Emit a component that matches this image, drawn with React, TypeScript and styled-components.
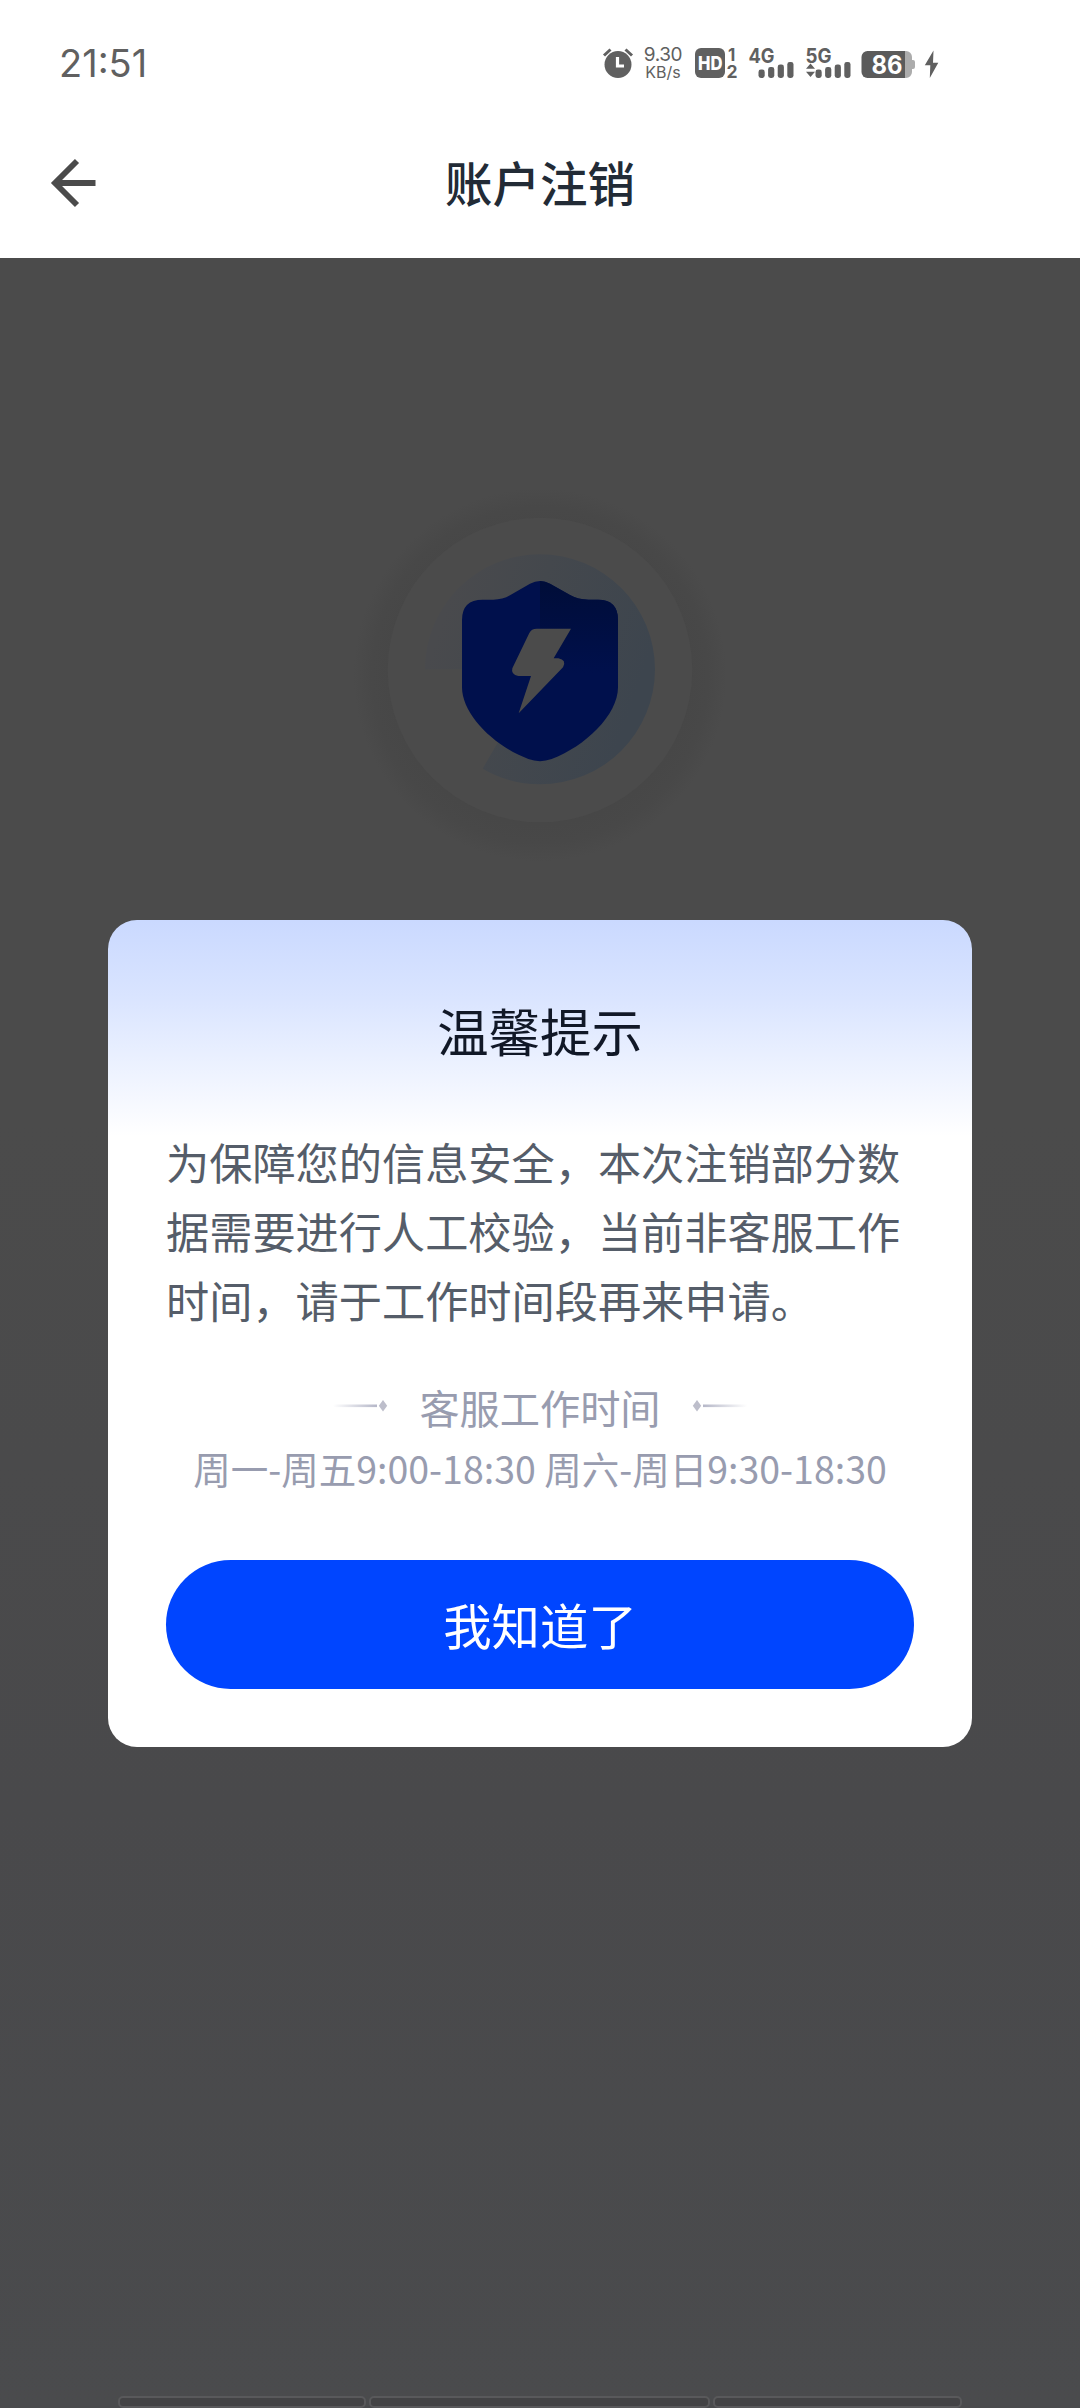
import React from "react";
import styled, { createGlobalStyle } from "styled-components";

const CJK = `"Noto Sans CJK SC", "Noto Sans", sans-serif`;
const INK = "#606060";

const GlobalStyle = createGlobalStyle`
  * { box-sizing: border-box; }
  body { margin: 0; background: #ffffff; font-family: ${CJK}; }
`;

const Page = styled.div`
  position: relative;
  width: 1080px;
  height: 2408px;
  display: flex;
  flex-direction: column;
  overflow: hidden;
`;

const StatusBar = styled.div`
  height: 112px;
  padding: 14px 140px 0 59px;
  display: flex;
  align-items: center;
  justify-content: space-between;
  color: ${INK};
`;

const Clock = styled.span`
  font-family: Inter, sans-serif;
  font-size: 38px;
  line-height: 44px;
  letter-spacing: 0;
`;

const StatusIcons = styled.div`
  display: flex;
  align-items: center;
  height: 40px;
`;

const Speed = styled.div`
  width: 44px;
  margin: 0 9px 0 7px;
  display: flex;
  flex-direction: column;
  align-items: center;
  font-family: Inter, sans-serif;
  font-size: 19px;
  letter-spacing: -0.4px;
  line-height: 18px;
`;

const SpeedUnit = styled.span`
  font-size: 16px;
  line-height: 16px;
  letter-spacing: 0;
`;

const Glyph = styled.svg<{ $gap?: number }>`
  display: block;
  flex: none;
  overflow: visible;
  margin-left: ${(p) => p.$gap ?? 0}px;
`;

const NavBar = styled.header`
  height: 146px;
  padding: 0 50px;
  display: grid;
  grid-template-columns: 60px 1fr 60px;
  align-items: center;
`;

const NavTitle = styled.h1`
  margin: 0;
  padding-bottom: 6px;
  text-align: center;
  font-size: 47.5px;
  line-height: 70px;
  font-weight: 500;
  color: #222b36;
`;

const BackButton = styled.button`
  border: 0;
  padding: 0;
  margin-top: -5px;
  background: none;
  height: 50px;
`;

const Dimmed = styled.main`
  flex: 1;
  display: flex;
  flex-direction: column;
  align-items: center;
  padding-top: 222px;
  background: linear-gradient(#4b4b4b 0%, #4b4b4b 40%, #49494b 72%, #4a4b4d 100%);
`;

const Segments = styled.div`
  margin-top: auto;
  width: 844px;
  display: flex;
  gap: 3px;
`;

const Segment = styled.div<{ $width: number }>`
  width: ${(p) => p.$width}px;
  height: 12px;
  border: 2px solid #59595b;
  border-radius: 5px;
  background: #434345;
`;

const Overlay = styled.div`
  position: absolute;
  inset: 258px 0 0;
  display: flex;
  flex-direction: column;
  align-items: center;
  padding-top: 662px;
`;

const Dialog = styled.section`
  width: 864px;
  height: 827px;
  padding: 0 58px;
  border-radius: 29px;
  display: flex;
  flex-direction: column;
  background: linear-gradient(#cad9ff 0px, #d9e4ff 75px, #ffffff 216px);
`;

const DialogTitle = styled.h2`
  margin: 70px 0 0;
  height: 80px;
  text-align: center;
  font-size: 51.4px;
  line-height: 80px;
  font-weight: 400;
  color: #111827;
`;

const Message = styled.p`
  margin: 57px -10px 0 0;
  font-size: 43.2px;
  line-height: 69.12px;
  color: #555d69;
`;

const Hours = styled.div`
  margin-top: 43px;
  display: flex;
  flex-direction: column;
  align-items: center;
  color: #989caf;
`;

const HoursHeading = styled.div`
  height: 60px;
  display: flex;
  align-items: center;
  font-size: 40.2px;
  line-height: 60px;
`;

const HoursLabel = styled.span`
  margin: 0 31px;
`;

const HoursRow = styled.div`
  height: 60px;
  margin-top: 1px;
  font-size: 37.5px;
  line-height: 60px;
  white-space: pre;
`;

const Confirm = styled.button`
  height: 129px;
  margin-top: auto;
  margin-bottom: 58px;
  padding: 0 0 1px;
  border: 0;
  border-radius: 65px;
  background: #0045ff;
  color: #ffffff;
  font-family: ${CJK};
  font-size: 48.4px;
  line-height: 70px;
  font-weight: 400;
`;

const iconFont = "Inter, sans-serif";

function AlarmIcon() {
  return (
    <Glyph width="32" height="32" viewBox="602 47 32 32">
      <circle cx="618" cy="64.5" r="13.5" fill={INK} />
      <path d="M604 55.5l6.5-6M632 55.5l-6.5-6" stroke={INK} strokeWidth="3" />
      <path d="M617.5 57v9h6.5" stroke="#fff" strokeWidth="3.2" fill="none" />
    </Glyph>
  );
}

function HdIcon() {
  return (
    <Glyph width="44" height="32" viewBox="695 47 44 32">
      <rect x="696" y="48" width="30" height="30" rx="6" fill={INK} />
      <text x="699" y="70" fontFamily={iconFont} fontSize="19" fontWeight="800" fill="#fff" textLength="24.500" lengthAdjust="spacingAndGlyphs">HD</text>
      <text x="729" y="60.500" fontFamily={iconFont} fontSize="17" fontWeight="700" fill={INK}>1</text>
      <text x="727.5" y="78" fontFamily={iconFont} fontSize="17.500" fontWeight="700" fill={INK}>2</text>
    </Glyph>
  );
}

function SignalIcon({ label, arrows }: { label: string; arrows?: boolean }) {
  const tops = [22.5, 20, 17.5, 15];
  return (
    <Glyph width="46" height="32" viewBox="0 0 46 32" $gap={11}>
      <text x="-0.500" y="15.5" fontFamily={iconFont} fontSize="20" fontWeight="700" fill={INK} textLength="26" lengthAdjust="spacingAndGlyphs">{label}</text>
      {arrows && <path d="M0 21.800h9l-4.500-5.200zM0 24.800h9l-4.500 5.200z" fill={INK} />}
      {tops.map((top, i) => (
        <rect key={top} x={9.5 + i * 9.6} y={top} width="6.2" height={31 - top} rx="2.4" fill={INK} />
      ))}
    </Glyph>
  );
}

function BatteryIcon() {
  return (
    <Glyph width="56" height="32" viewBox="860 47 56 32" $gap={8}>
      <path d="M905 51h1a6 6 0 0 1 6 6v3h1a2 2 0 0 1 2 2v5a2 2 0 0 1-2 2h-1v3a6 6 0 0 1-6 6h-1z" fill="#acacac" />
      <path d="M867.500 51H905v27h-37.500a6 6 0 0 1-6-6V57a6 6 0 0 1 6-6z" fill="#5b5b5b" />
      <text x="887" y="73.800" textAnchor="middle" fontFamily={iconFont} fontSize="25" fontWeight="700" fill="#fff" textLength="31" lengthAdjust="spacingAndGlyphs">86</text>
    </Glyph>
  );
}

function ChargeIcon() {
  return (
    <Glyph width="16" height="32" viewBox="924 47 16 32" $gap={8}>
      <path d="M933.500 50.500L924.800 65.300h5.500L929.800 78l8.500-15.300h-5.300z" fill={INK} />
    </Glyph>
  );
}

function ShieldArt() {
  return (
    <Glyph width="400" height="400" viewBox="0 0 1200 1200">
      <defs>
        <radialGradient id="halo">
          <stop offset="0.8" stopColor="#474747" />
          <stop offset="0.9" stopColor="#484848" />
          <stop offset="1" stopColor="#4b4b4b" />
        </radialGradient>
        <linearGradient id="sweep" x1="0" y1="0.5" x2="0.85" y2="0.8">
          <stop offset="0" stopColor="#494a4d" />
          <stop offset="0.4" stopColor="#44484d" />
          <stop offset="1" stopColor="#3d454e" />
        </linearGradient>
        <linearGradient id="facet" x1="0" y1="0" x2="0" y2="1">
          <stop offset="0" stopColor="#000d38" />
          <stop offset="1" stopColor="#00104c" />
        </linearGradient>
      </defs>
      <circle cx="600" cy="585" r="560" fill="url(#halo)" />
      <circle cx="600" cy="570" r="457" fill="#4b4b4b" />
      <path d="M600 568L428 866A345 345 0 0 0 600 913A345 345 0 1 0 255 568z" fill="url(#sweep)" />
      <path
        d="M570 311Q600 295 630 311L690 345Q714 359 745 359H774Q834 359 834 420V622C834 705 735 800 635 837Q600 850 565 837C465 800 366 705 366 622V420Q366 359 428 359H460Q488 359 510 346Z"
        fill="#00104c"
      />
      <path d="M600 303Q616 303 630 311L690 345Q714 359 745 359H774Q834 359 834 420V580H600z" fill="url(#facet)" />
      <path
        d="M590 446H693L641 535H655Q681 540 669 562L536 700L573 588H535Q512 584 517 565L568 459Q574 446 590 446Z"
        fill="#4b4b4b"
      />
    </Glyph>
  );
}

function Flourish({ flip }: { flip?: boolean }) {
  const id = flip ? "fadeRight" : "fadeLeft";
  return (
    <Glyph width="55" height="14" viewBox="0 0 55 14">
      <defs>
        <linearGradient id={id} x1="0" x2="1" y1="0" y2="0">
          <stop offset="0" stopColor="#b5b7c8" stopOpacity="0" />
          <stop offset="1" stopColor="#b5b7c8" />
        </linearGradient>
      </defs>
      <g transform={flip ? "translate(55 0) scale(-1 1)" : undefined}>
        <rect x="0" y="4.500" width="44" height="2.6" fill={`url(#${id})`} />
        <path d="M50 0l4.200 5.800-4.200 5.800-4.200-5.800z" fill="#bdbecb" />
      </g>
    </Glyph>
  );
}

export default function App() {
  return (
    <Page>
      <GlobalStyle />
      <StatusBar>
        <Clock>21:51</Clock>
        <StatusIcons>
          <AlarmIcon />
          <Speed>
            <span>9.30</span>
            <SpeedUnit>KB/s</SpeedUnit>
          </Speed>
          <HdIcon />
          <SignalIcon label="4G" />
          <SignalIcon label="5G" arrows />
          <BatteryIcon />
          <ChargeIcon />
        </StatusIcons>
      </StatusBar>
      <NavBar>
        <BackButton aria-label="返回">
          <Glyph width="48" height="50" viewBox="0 0 48 50">
            <path d="M45.500 25H6M27 3L5 25l22 22" fill="none" stroke="#4b4b4b" strokeWidth="5.800" />
          </Glyph>
        </BackButton>
        <NavTitle>账户注销</NavTitle>
      </NavBar>
      <Dimmed>
        <ShieldArt />
        <Segments>
          <Segment $width={248} />
          <Segment $width={341} />
          <Segment $width={249} />
        </Segments>
      </Dimmed>
      <Overlay>
        <Dialog role="dialog">
          <DialogTitle>温馨提示</DialogTitle>
          <Message>为保障您的信息安全，本次注销部分数据需要进行人工校验，当前非客服工作时间，请于工作时间段再来申请。</Message>
          <Hours>
            <HoursHeading>
              <Flourish />
              <HoursLabel>客服工作时间</HoursLabel>
              <Flourish flip />
            </HoursHeading>
            <HoursRow>周一-周五9:00-18:30 周六-周日9:30-18:30</HoursRow>
          </Hours>
          <Confirm>我知道了</Confirm>
        </Dialog>
      </Overlay>
    </Page>
  );
}
